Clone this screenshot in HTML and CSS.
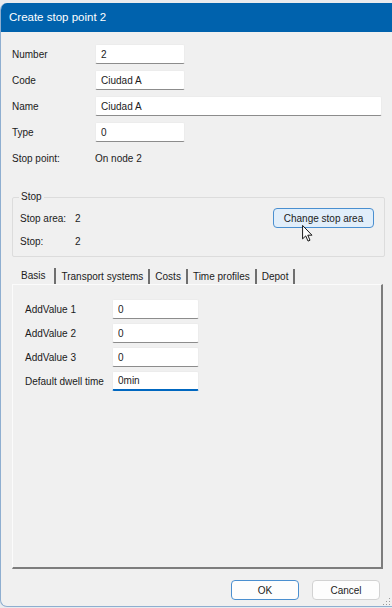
FILE: index.html
```html
<!DOCTYPE html>
<html lang="en">
<head>
    <meta charset="UTF-8">
    <meta name="viewport" content="width=device-width, initial-scale=1.0">
    <title>Create stop point 2</title>
    <link rel="stylesheet" href="styles.css">
</head>
<body>
    <div class="window">
        <div class="titlebar">Create stop point 2</div>

        <div class="content">
            <div class="fields">
                <label for="number">Number</label>
                <input type="text" id="number" class="short" value="2">

                <label for="code">Code</label>
                <input type="text" id="code" class="short" value="Ciudad A">

                <label for="name">Name</label>
                <input type="text" id="name" class="long" value="Ciudad A">

                <label for="type">Type</label>
                <input type="text" id="type" class="short" value="0">

                <span>Stop point:</span>
                <span>On node 2</span>
            </div>

            <fieldset class="group">
                <legend>Stop</legend>
                <div class="group-row">
                    <span class="key">Stop area:</span>
                    <span class="val">2</span>
                    <button type="button" class="btn btn-accent">Change stop area</button>
                </div>
                <div class="group-row">
                    <span class="key">Stop:</span>
                    <span class="val">2</span>
                </div>
            </fieldset>

            <div class="tabs">
                <span class="tab active">Basis</span>
                <span class="tab">Transport systems</span>
                <span class="tab">Costs</span>
                <span class="tab">Time profiles</span>
                <span class="tab">Depot</span>
            </div>
            <div class="tab-panel">
                <div class="fields fields-panel">
                    <label for="av1">AddValue 1</label>
                    <input type="text" id="av1" value="0">

                    <label for="av2">AddValue 2</label>
                    <input type="text" id="av2" value="0">

                    <label for="av3">AddValue 3</label>
                    <input type="text" id="av3" value="0">

                    <label for="dwell">Default dwell time</label>
                    <input type="text" id="dwell" class="focused" value="0min">
                </div>
            </div>

            <div class="actions">
                <button type="button" class="btn btn-default">OK</button>
                <button type="button" class="btn">Cancel</button>
            </div>
        </div>

        <svg class="cursor" width="11" height="17" viewBox="0 0 12 19">
            <path d="M0.5 0.5 L0.5 15.5 L4 12.2 L6.6 18 L8.8 17 L6.3 11.4 L11 11.4 Z" fill="#fff" stroke="#000" stroke-width="1" stroke-linejoin="round"/>
        </svg>
        <svg class="grip" width="8" height="8" viewBox="0 0 8 8">
            <rect x="6" y="0" width="1" height="1" fill="#9a9a9a"/>
            <rect x="3" y="3" width="1" height="1" fill="#9a9a9a"/>
            <rect x="6" y="3" width="1" height="1" fill="#9a9a9a"/>
            <rect x="0" y="6" width="1" height="1" fill="#9a9a9a"/>
            <rect x="3" y="6" width="1" height="1" fill="#9a9a9a"/>
            <rect x="6" y="6" width="1" height="1" fill="#9a9a9a"/>
        </svg>
    </div>
</body>
</html>
```

FILE: styles.css
```css
body {
    margin: 0;
    background-color: #e9ebee;
    font-family: "Liberation Sans", Arial, sans-serif;
    font-size: 10px;
    color: #1b1b1b;
}
.window {
    position: relative;
    box-sizing: border-box;
    margin-top: 3px;
    width: 392px;
    height: 604px;
    background: #f0f0f0;
    border-left: 1px solid #8eaed0;
    border-bottom: 1px solid #8eaed0;
    border-radius: 7px 0 0 7px;
    overflow: hidden;
}
.titlebar {
    height: 29px;
    line-height: 29px;
    padding-left: 8px;
    background-color: #0062ad;
    color: #fff;
    font-size: 11.5px;
}
.content {
    padding: 12px 0 0 11px;
}
.fields {
    display: grid;
    grid-template-columns: 83px auto;
    grid-auto-rows: 20px;
    row-gap: 6px;
    align-items: center;
}
input[type="text"] {
    box-sizing: border-box;
    height: 20px;
    width: 90px;
    padding: 0 5px;
    margin: 0;
    border: 1px solid #ececec;
    border-bottom: 1px solid #8c8c8c;
    border-radius: 2px;
    background: #fff;
    font-family: inherit;
    font-size: 10px;
    color: #1b1b1b;
    outline: none;
}
input.long {
    width: 287px;
}
input.focused {
    border-bottom: 2px solid #0067c0;
}
.group {
    box-sizing: border-box;
    width: 373px;
    margin: 22px 0 0 0;
    padding: 4px 10px 5px 7px;
    border: 1px solid #dcdcdc;
    border-radius: 2px;
}
.group legend {
    padding: 0 2px;
    margin-left: -1px;
    line-height: 14px;
}
.group-row {
    display: flex;
    align-items: center;
    height: 20px;
}
.group-row + .group-row {
    margin-top: 3px;
}
.key {
    width: 55px;
}
.val {
    flex: 1;
}
.btn {
    box-sizing: border-box;
    height: 20px;
    padding: 0 10px;
    border: 1px solid #d2d2d2;
    border-radius: 4px;
    background-color: #fdfdfd;
    font-family: inherit;
    font-size: 10px;
    color: #1b1b1b;
    white-space: nowrap;
    cursor: pointer;
}
.btn-accent {
    width: 101px;
    padding: 0;
    background-color: #e1eefa;
    border-color: #4a8fd0;
}
.btn-default {
    border-color: #4a8fd0;
}
.tabs {
    display: flex;
    align-items: flex-end;
    height: 19px;
    margin-top: 8px;
}
.tab {
    height: 15px;
    line-height: 15px;
    padding: 0 5px;
    border-right: 2px solid #6f6f6f;
}
.tab.active {
    height: 16px;
    padding: 0 9px;
}
.tab-panel {
    box-sizing: border-box;
    width: 371px;
    height: 285px;
    padding: 14px 0 0 12px;
    border-top: 1px solid #fbfbfb;
    border-left: 1px solid #fbfbfb;
    border-right: 2px solid #7d7d7d;
    border-bottom: 2px solid #7d7d7d;
}
.fields-panel {
    grid-template-columns: 87px auto;
    row-gap: 4px;
}
.fields-panel input[type="text"] {
    width: 87px;
}
.actions {
    display: flex;
    justify-content: flex-end;
    gap: 13px;
    width: 368px;
    margin-top: 11px;
}
.actions .btn {
    width: 68px;
}
.cursor {
    position: absolute;
    left: 301px;
    top: 222px;
}
.grip {
    position: absolute;
    right: 1px;
    bottom: 0;
}
```
